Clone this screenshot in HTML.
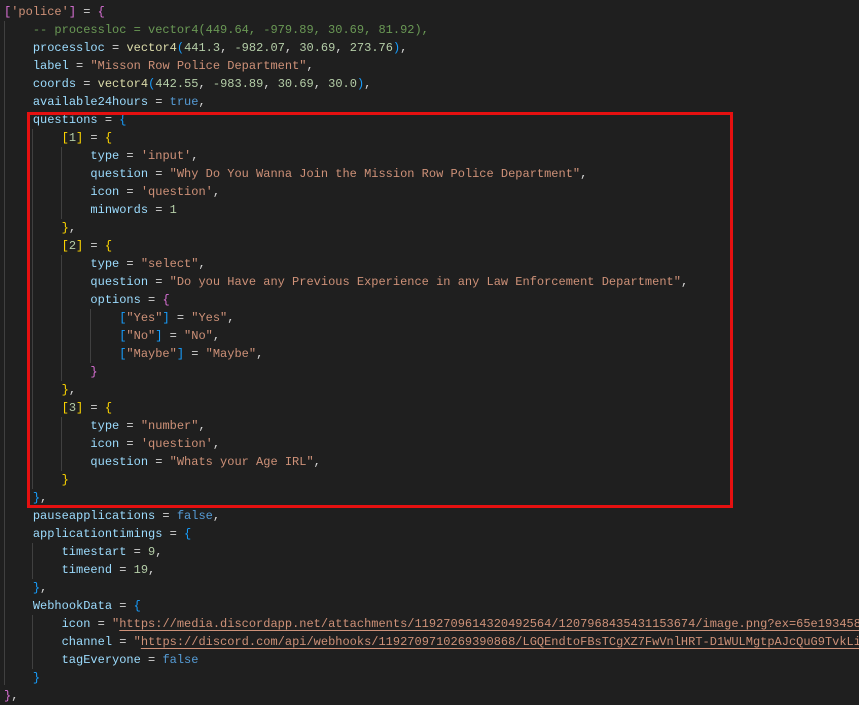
<!DOCTYPE html>
<html><head><meta charset="utf-8"><style>
html,body{margin:0;padding:0;background:#1f1f1f;width:859px;height:702px;overflow:hidden}
#c{position:absolute;left:4px;top:3px;font-family:"Liberation Mono",monospace;font-size:12px;color:#d4d4d4}
.l{height:18px;line-height:18px;white-space:pre}
.k{color:#9cdcfe}.s{color:#ce9178}.n{color:#b5cea8}.b{color:#569cd6}.c{color:#6a9955}
.p{color:#da70d6}.y{color:#ffd700}.u{color:#179fff}
.url{color:#ce9178;text-decoration:underline;text-underline-offset:3px}
.g{position:absolute;width:1px;background:#404040}
#box{position:absolute;left:27px;top:112px;width:700px;height:390px;border:3px solid #e51010}
</style></head><body>
<div class="g" style="left:4px;top:21px;height:664px"></div>
<div class="g" style="left:32px;top:129px;height:360px"></div>
<div class="g" style="left:61px;top:147px;height:72px"></div>
<div class="g" style="left:61px;top:255px;height:126px"></div>
<div class="g" style="left:90px;top:309px;height:54px"></div>
<div class="g" style="left:61px;top:417px;height:54px"></div>
<div class="g" style="left:32px;top:543px;height:36px"></div>
<div class="g" style="left:32px;top:615px;height:54px"></div>
<div id="c">
<div class="l"><span class="p">[</span><span class="s">'police'</span><span class="p">]</span> = <span class="p">{</span></div>
<div class="l">    <span class="c">-- processloc = vector4(449.64, -979.89, 30.69, 81.92),</span></div>
<div class="l">    <span class="k">processloc</span> = <span style="color:#dcdcaa">vector4</span><span class="u">(</span><span class="n">441.3</span>, <span class="n">-982.07</span>, <span class="n">30.69</span>, <span class="n">273.76</span><span class="u">)</span>,</div>
<div class="l">    <span class="k">label</span> = <span class="s">"Misson Row Police Department"</span>,</div>
<div class="l">    <span class="k">coords</span> = <span style="color:#dcdcaa">vector4</span><span class="u">(</span><span class="n">442.55</span>, <span class="n">-983.89</span>, <span class="n">30.69</span>, <span class="n">30.0</span><span class="u">)</span>,</div>
<div class="l">    <span class="k">available24hours</span> = <span class="b">true</span>,</div>
<div class="l">    <span class="k">questions</span> = <span class="u">{</span></div>
<div class="l">        <span class="y">[</span><span class="n">1</span><span class="y">]</span> = <span class="y">{</span></div>
<div class="l">            <span class="k">type</span> = <span class="s">'input'</span>,</div>
<div class="l">            <span class="k">question</span> = <span class="s">"Why Do You Wanna Join the Mission Row Police Department"</span>,</div>
<div class="l">            <span class="k">icon</span> = <span class="s">'question'</span>,</div>
<div class="l">            <span class="k">minwords</span> = <span class="n">1</span></div>
<div class="l">        <span class="y">}</span>,</div>
<div class="l">        <span class="y">[</span><span class="n">2</span><span class="y">]</span> = <span class="y">{</span></div>
<div class="l">            <span class="k">type</span> = <span class="s">"select"</span>,</div>
<div class="l">            <span class="k">question</span> = <span class="s">"Do you Have any Previous Experience in any Law Enforcement Department"</span>,</div>
<div class="l">            <span class="k">options</span> = <span class="p">{</span></div>
<div class="l">                <span class="u">[</span><span class="s">"Yes"</span><span class="u">]</span> = <span class="s">"Yes"</span>,</div>
<div class="l">                <span class="u">[</span><span class="s">"No"</span><span class="u">]</span> = <span class="s">"No"</span>,</div>
<div class="l">                <span class="u">[</span><span class="s">"Maybe"</span><span class="u">]</span> = <span class="s">"Maybe"</span>,</div>
<div class="l">            <span class="p">}</span></div>
<div class="l">        <span class="y">}</span>,</div>
<div class="l">        <span class="y">[</span><span class="n">3</span><span class="y">]</span> = <span class="y">{</span></div>
<div class="l">            <span class="k">type</span> = <span class="s">"number"</span>,</div>
<div class="l">            <span class="k">icon</span> = <span class="s">'question'</span>,</div>
<div class="l">            <span class="k">question</span> = <span class="s">"Whats your Age IRL"</span>,</div>
<div class="l">        <span class="y">}</span></div>
<div class="l">    <span class="u">}</span>,</div>
<div class="l">    <span class="k">pauseapplications</span> = <span class="b">false</span>,</div>
<div class="l">    <span class="k">applicationtimings</span> = <span class="u">{</span></div>
<div class="l">        <span class="k">timestart</span> = <span class="n">9</span>,</div>
<div class="l">        <span class="k">timeend</span> = <span class="n">19</span>,</div>
<div class="l">    <span class="u">}</span>,</div>
<div class="l">    <span class="k">WebhookData</span> = <span class="u">{</span></div>
<div class="l">        <span class="k">icon</span> = <span class="s">"</span><span class="url">https://media.discordapp.net/attachments/1192709614320492564/1207968435431153674/image.png?ex=65e193458</span></div>
<div class="l">        <span class="k">channel</span> = <span class="s">"</span><span class="url">https://discord.com/api/webhooks/1192709710269390868/LGQEndtoFBsTCgXZ7FwVnlHRT-D1WULMgtpAJcQuG9TvkLi</span></div>
<div class="l">        <span class="k">tagEveryone</span> = <span class="b">false</span></div>
<div class="l">    <span class="u">}</span></div>
<div class="l"><span class="p">}</span>,</div>
</div>
<div id="box"></div>
</body></html>
